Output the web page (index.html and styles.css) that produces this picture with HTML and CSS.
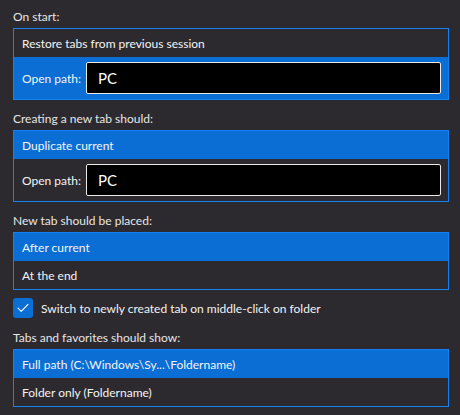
FILE: index.html
```html
<!DOCTYPE html>
<html>
<head>
<meta charset="utf-8">
<link rel="stylesheet" href="styles.css">
</head>
<body>
<div class="page">
  <div class="label">On start:</div>
  <div class="group">
    <div class="row">Restore tabs from previous session</div>
    <div class="row path sel">
      <span class="path-label">Open path:</span>
      <div class="input">PC</div>
    </div>
  </div>

  <div class="label">Creating a new tab should:</div>
  <div class="group">
    <div class="row sel">Duplicate current</div>
    <div class="row path">
      <span class="path-label">Open path:</span>
      <div class="input">PC</div>
    </div>
  </div>

  <div class="label">New tab should be placed:</div>
  <div class="group">
    <div class="row sel">After current</div>
    <div class="row">At the end</div>
  </div>

  <div class="check-row">
    <span class="checkbox">
      <svg width="12" height="10" viewBox="0 0 12 10"><path d="M1 5.2 L4.2 8.4 L11 1.4" fill="none" stroke="#fff" stroke-width="1.1" stroke-linecap="round" stroke-linejoin="round"/></svg>
    </span>
    <span>Switch to newly created tab on middle-click on folder</span>
  </div>

  <div class="label">Tabs and favorites should show:</div>
  <div class="group">
    <div class="row sel">Full path (C:\Windows\Sy...\Foldername)</div>
    <div class="row">Folder only (Foldername)</div>
  </div>
</div>
</body>
</html>
```

FILE: styles.css
```css
* { box-sizing: border-box; }
html, body {
  margin: 0;
  padding: 0;
  background: #2c2a2f;
}
body {
  font-family: Lato, "Noto Sans", sans-serif;
  font-size: 12px;
  color: #f2f2f2;
  width: 460px;
  height: 415px;
  overflow: hidden;
}
.page {
  padding: 6px 11px 0 13px;
  display: flex;
  flex-direction: column;
}
.label {
  height: 22px;
  line-height: 22px;
  color: #e6e6e6;
}
.label:not(:first-child) {
  margin-top: 8px;
}
.group {
  border: 1px solid #1482f5;
  display: flex;
  flex-direction: column;
}
.row {
  height: 28px;
  display: flex;
  align-items: center;
  padding-left: 8px;
  color: #f4f4f4;
}
.row.sel {
  background: #0b6ed5;
}
.row.path {
  height: 42px;
  padding-right: 7px;
  gap: 5px;
}
.path-label {
  flex: none;
}
.input {
  flex: 1;
  height: 32px;
  background: #000;
  border: 1px solid #e8e8e8;
  border-radius: 2px;
  color: #fff;
  font-size: 15px;
  display: flex;
  align-items: center;
  padding-left: 11px;
}
.check-row {
  margin-top: 7px;
  height: 22px;
  display: flex;
  align-items: center;
  gap: 8px;
  color: #f2f2f2;
}
.checkbox {
  width: 20px;
  height: 20px;
  border-radius: 3px;
  background: #0b6ed5;
  display: flex;
  align-items: center;
  justify-content: center;
  flex: none;
}
.check-row + .label {
  margin-top: 8px;
}
```
